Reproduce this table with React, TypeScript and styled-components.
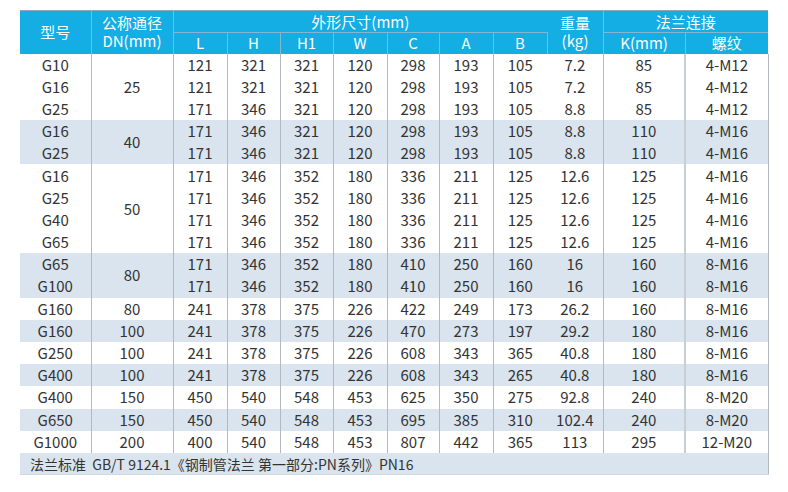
import React from "react";
import styled, { createGlobalStyle } from "styled-components";

const GlobalStyle = createGlobalStyle`
  html, body { margin: 0; padding: 0; background: #ffffff; }
  body { font-family: "Noto Sans CJK SC", "Noto Sans", sans-serif; }
`;

const Page = styled.div`
  padding: 10px 0 0 20px;
  width: 788px;
  height: 492px;
  box-sizing: border-box;
`;

const Table = styled.table`
  width: 748px;
  table-layout: fixed;
  border-collapse: collapse;
  border-spacing: 0;
  border-top: 1px solid #8ea3b3;
  font-family: "Noto Sans CJK SC", "Noto Sans", sans-serif;
  font-size: 15px;
  color: #333333;
`;

const HeadRow = styled.tr<{ $h: number }>`
  height: ${(p) => p.$h}px;
  background: #14ade4;
`;

const HeadCell = styled.th<{ $noBottom?: boolean; $noRight?: boolean }>`
  padding: 0;
  font-weight: 400;
  color: #ffffff;
  text-align: center;
  vertical-align: middle;
  line-height: 18px;
  border-right: ${(p) => (p.$noRight ? "none" : "1px solid #86b6cf")};
  border-bottom: ${(p) => (p.$noBottom ? "none" : "1px solid #86b6cf")};
`;

const HeadLine = styled.span`
  display: block;
  height: 18px;
  line-height: 18px;
  overflow: visible;
`;

const BodyRow = styled.tr<{ $alt: boolean }>`
  height: 22.2px;
  background: ${(p) => (p.$alt ? "#d9e4ee" : "#ffffff")};
`;

const Cell = styled.td<{ $line?: "none" | "thin" | "thick" }>`
  padding: 0;
  text-align: center;
  vertical-align: middle;
  line-height: 20px;
  white-space: nowrap;
  border-right: ${(p) =>
    p.$line === "none"
      ? "none"
      : p.$line === "thick"
      ? "2px solid #c9ced3"
      : "1px solid #b3b9bf"};
`;

const FootRow = styled.tr`
  height: 22px;
  background: #d9e4ee;
`;

const FootCell = styled.td`
  padding: 0 0 0 10px;
  text-align: left;
  font-size: 14px;
  line-height: 20px;
  color: #333333;
  border-right: 1px solid #b3b9bf;
  border-bottom: 1px solid #d0d8e0;
`;

type Group = { dn: string; rows: string[][] };

const groups: Group[] = [
  {
    dn: "25",
    rows: [
      ["G10", "121", "321", "321", "120", "298", "193", "105", "7.2", "85", "4-M12"],
      ["G16", "121", "321", "321", "120", "298", "193", "105", "7.2", "85", "4-M12"],
      ["G25", "171", "346", "321", "120", "298", "193", "105", "8.8", "85", "4-M12"],
    ],
  },
  {
    dn: "40",
    rows: [
      ["G16", "171", "346", "321", "120", "298", "193", "105", "8.8", "110", "4-M16"],
      ["G25", "171", "346", "321", "120", "298", "193", "105", "8.8", "110", "4-M16"],
    ],
  },
  {
    dn: "50",
    rows: [
      ["G16", "171", "346", "352", "180", "336", "211", "125", "12.6", "125", "4-M16"],
      ["G25", "171", "346", "352", "180", "336", "211", "125", "12.6", "125", "4-M16"],
      ["G40", "171", "346", "352", "180", "336", "211", "125", "12.6", "125", "4-M16"],
      ["G65", "171", "346", "352", "180", "336", "211", "125", "12.6", "125", "4-M16"],
    ],
  },
  {
    dn: "80",
    rows: [
      ["G65", "171", "346", "352", "180", "410", "250", "160", "16", "160", "8-M16"],
      ["G100", "171", "346", "352", "180", "410", "250", "160", "16", "160", "8-M16"],
    ],
  },
  { dn: "80", rows: [["G160", "241", "378", "375", "226", "422", "249", "173", "26.2", "160", "8-M16"]] },
  { dn: "100", rows: [["G160", "241", "378", "375", "226", "470", "273", "197", "29.2", "180", "8-M16"]] },
  { dn: "100", rows: [["G250", "241", "378", "375", "226", "608", "343", "365", "40.8", "180", "8-M16"]] },
  { dn: "100", rows: [["G400", "241", "378", "375", "226", "608", "343", "265", "40.8", "180", "8-M16"]] },
  { dn: "150", rows: [["G400", "450", "540", "548", "453", "625", "350", "275", "92.8", "240", "8-M20"]] },
  { dn: "150", rows: [["G650", "450", "540", "548", "453", "695", "385", "310", "102.4", "240", "8-M20"]] },
  { dn: "200", rows: [["G1000", "400", "540", "548", "453", "807", "442", "365", "113", "295", "12-M20"]] },
];

const colWidths = [71, 82, 54, 53, 53, 54, 52, 54, 54, 56, 82, 83];

const lineAfter = (i: number): "none" | "thin" | "thick" => {
  if (i === 7) return "none";
  if (i === 9) return "thick";
  return "thin";
};

export default function App() {
  return (
    <Page>
      <GlobalStyle />
      <Table>
        <colgroup>
          {colWidths.map((w, i) => (
            <col key={i} style={{ width: w }} />
          ))}
        </colgroup>
        <thead>
          <HeadRow $h={22}>
            <HeadCell rowSpan={2} $noBottom>型号</HeadCell>
            <HeadCell rowSpan={2} $noBottom>
              <HeadLine>公称通径</HeadLine>
              <HeadLine>DN(mm)</HeadLine>
            </HeadCell>
            <HeadCell colSpan={7} $noRight>外形尺寸(mm)</HeadCell>
            <HeadCell rowSpan={2} $noBottom>
              <HeadLine>重量</HeadLine>
              <HeadLine>(kg)</HeadLine>
            </HeadCell>
            <HeadCell colSpan={2} $noRight>法兰连接</HeadCell>
          </HeadRow>
          <HeadRow $h={21}>
            <HeadCell $noBottom>L</HeadCell>
            <HeadCell $noBottom>H</HeadCell>
            <HeadCell $noBottom>H1</HeadCell>
            <HeadCell $noBottom>W</HeadCell>
            <HeadCell $noBottom>C</HeadCell>
            <HeadCell $noBottom>A</HeadCell>
            <HeadCell $noBottom>B</HeadCell>
            <HeadCell $noBottom>K(mm)</HeadCell>
            <HeadCell $noBottom $noRight>螺纹</HeadCell>
          </HeadRow>
        </thead>
        <tbody>
          {groups.map((g, gi) =>
            g.rows.map((r, ri) => (
              <BodyRow key={`${gi}-${ri}`} $alt={gi % 2 === 1}>
                <Cell $line="thin">{r[0]}</Cell>
                {ri === 0 && (
                  <Cell rowSpan={g.rows.length} $line="thin">
                    {g.dn}
                  </Cell>
                )}
                {r.slice(1).map((v, ci) => (
                  <Cell key={ci} $line={lineAfter(ci + 1)}>
                    {v}
                  </Cell>
                ))}
              </BodyRow>
            ))
          )}
          <FootRow>
            <FootCell colSpan={12}>
              法兰标准&nbsp;&nbsp;GB/T 9124.1《钢制管法兰 第一部分:PN系列》PN16
            </FootCell>
          </FootRow>
        </tbody>
      </Table>
    </Page>
  );
}
